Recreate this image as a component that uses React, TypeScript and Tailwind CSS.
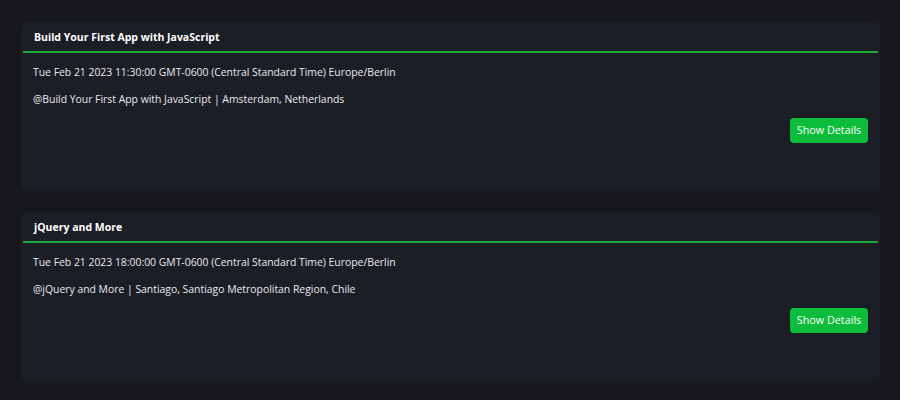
const events = [
  {
    id: 1,
    title: 'Build Your First App with JavaScript',
    date: 'Tue Feb 21 2023 11:30:00 GMT-0600 (Central Standard Time) Europe/Berlin',
    place: 'Amsterdam, Netherlands',
  },
  {
    id: 2,
    title: 'jQuery and More',
    date: 'Tue Feb 21 2023 18:00:00 GMT-0600 (Central Standard Time) Europe/Berlin',
    place: 'Santiago, Santiago Metropolitan Region, Chile',
  },
];

export default function App() {
  return (
    <div
      className="min-h-[400px] bg-[#16181d] pl-[21px] pr-[20px] pt-[22px] pb-4 flex flex-col gap-[21px] text-[#e8e9ec]"
      style={{ fontFamily: '"Open Sans", "Noto Sans", sans-serif' }}
    >
      {events.map((event) => (
        <div key={event.id} className="bg-[#1c1e26] rounded-[5px] h-[169px] flex flex-col">
          <div className="h-[31px] pt-[2px] px-[11px] flex items-center border-b-2 border-[#1fa83a] mx-[2px]">
            <h2 className="text-[10.5px] font-bold text-white">{event.title}</h2>
          </div>
          <div className="px-[12px] pt-[9px] flex flex-col">
            <p className="text-[10.4px] leading-[20px]">{event.date}</p>
            <p className="text-[10.4px] leading-[20px] mt-[7px]">
              @{event.title} | {event.place}
            </p>
            <div className="flex justify-end mt-[9px]">
              <button className="bg-[#0cbd3c] text-white text-[10.8px] rounded-[4px] h-[25px] w-[78px]">
                Show Details
              </button>
            </div>
          </div>
        </div>
      ))}
    </div>
  );
}
